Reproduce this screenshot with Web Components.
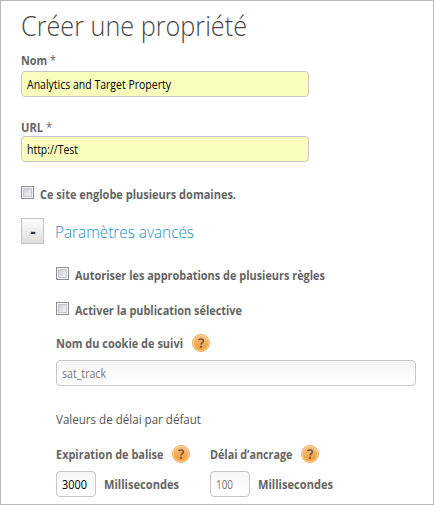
<!DOCTYPE html>
<html lang="fr">
<head>
<meta charset="utf-8">
<title>Créer une propriété</title>
<style>
html, body { margin: 0; height: 100%; background: #fff; }
body { font-family: "Open Sans", "Noto Sans", sans-serif; font-size: 12px; color: #666; }
</style>
</head>
<body>
<property-form></property-form>
<script>
// A single line of text set to an exact width.
class TextLine extends HTMLElement {
  constructor() {
    super();
    this.attachShadow({ mode: 'open' }).innerHTML = `
      <style>
        :host { display: block; line-height: 18px; white-space: nowrap; flex: none; }
        span { display: inline-block; transform-origin: 0 50%; }
        :host([kind=title]) { font-size: 28px; line-height: 40px; font-weight: 300; color: #484848; }
        :host([kind=section]) { font-size: 17px; line-height: 26px; font-weight: 300; color: #2590c4; }
        :host([kind=label]) { font-weight: 700; color: #646464; }
        :host([kind=plain]) { font-size: 12.5px; color: #555; }
        :host([kind=value]) { font-size: 12px; line-height: 24px; }
        :host([kind=unit]) { font-weight: 700; color: #646464; line-height: 26px; }
      </style><span><slot></slot></span>`;
  }
  connectedCallback() {
    const width = Number(this.getAttribute('width'));
    this.style.width = width + 'px';
    const span = this.shadowRoot.querySelector('span');
    span.style.transform = `translateY(1px) scaleX(${width / span.getBoundingClientRect().width})`;
  }
}

class TextField extends HTMLElement {
  constructor() {
    super();
    this.attachShadow({ mode: 'open' }).innerHTML = `
      <style>
        :host { display: block; box-sizing: border-box; flex: none; width: 288px; height: 26px; padding-left: 5px;
          border: 1px solid #c6c6c6; border-radius: 4px; color: #777;
          background: linear-gradient(#f6f6f6, #fff 85%); }
        :host([required]) { background: #faffbd; color: #000; }
        :host([filled]) { color: #000; }
        :host([size=wide]) { width: 360px; }
        :host([size=small]) { width: 40px; }
      </style><slot></slot>`;
  }
}

class CheckRow extends HTMLElement {
  constructor() {
    super();
    this.attachShadow({ mode: 'open' }).innerHTML = `
      <style>
        :host { display: flex; height: 18px; gap: 6px; }
        i { box-sizing: border-box; width: 13px; height: 13px; margin-top: 1px; border: 1px solid #8e8f8f;
          background: linear-gradient(135deg, #cbcfd5, #f5f5f5) 2px 2px / 7px 7px no-repeat, #f4f4f4;
          box-shadow: inset 0 0 0 1px #f4f4f4, inset 0 0 0 2px #c4c7cb; }
      </style><i></i><slot></slot>`;
  }
}

class HelpIcon extends HTMLElement {
  constructor() {
    super();
    this.attachShadow({ mode: 'open' }).innerHTML = `
      <style>:host { display: block; width: 18px; height: 18px; flex: none; } svg { display: block; }</style>
      <svg width="18" height="18" viewBox="0 0 18 18">
        <defs><linearGradient id="g" x1="0" y1="0" x2="0" y2="1">
          <stop offset="0" stop-color="#f8c184"/><stop offset=".5" stop-color="#f5ae5a"/><stop offset="1" stop-color="#f09a2c"/>
        </linearGradient></defs>
        <circle cx="9" cy="9" r="8.5" fill="url(#g)" stroke="#f0ac5e"/>
        <circle cx="9" cy="9" r="7.6" fill="none" stroke="#fbdcb2" stroke-width=".8"/>
        <path d="M6.4 6Q7.4 5 9 5Q11.4 5 11.4 6.9Q11.4 7.9 10.1 8.7Q9 9.3 9 10.6" fill="none" stroke="#755636" stroke-width="1.6"/>
        <rect x="8" y="11.7" width="2" height="2" fill="#755636"/>
      </svg>`;
  }
}

class ToggleButton extends HTMLElement {
  constructor() {
    super();
    this.attachShadow({ mode: 'open' }).innerHTML = `
      <style>
        :host { box-sizing: border-box; display: grid; place-items: center; width: 23px; height: 26px; flex: none;
          padding: 1px 0 0 1px; border: 1px solid #c4c4c4; background: linear-gradient(#fdfdfd, #dedede);
          font: 700 17px/20px "Open Sans", sans-serif; color: #333; }
      </style><slot></slot>`;
  }
}

class PropertyForm extends HTMLElement {
  constructor() {
    super();
    this.attachShadow({ mode: 'open' }).innerHTML = `
      <style>
        :host { box-sizing: border-box; display: flex; flex-direction: column; width: 434px; height: 505px;
          border: 1px solid #bbb; background: #fff; padding: 3px 0 0 20px; overflow: hidden; }
        .group { display: flex; flex-direction: column; }
        .nom { margin-top: 7px; gap: 2px; }
        .url { margin-top: 21px; }
        .multi { margin-top: 23px; }
        .section { display: flex; gap: 11px; margin-top: 15px; }
        .advanced { padding-left: 35px; margin-top: 22px; }
        .advanced check-row + check-row { margin-top: 17px; }
        .help { display: flex; gap: 9px; }
        .cookie { margin-top: 15px; gap: 8px; }
        .subtitle { margin-top: 24px; }
        .delays { display: flex; margin-top: 17px; }
        .delay { width: 154px; gap: 8px; }
        .delay .help { gap: 8.5px; }
        .entry { display: flex; gap: 8px; }
        .star { font-weight: 400; }
      </style>
      <text-line kind="title" width="226">Créer une propriété</text-line>
      <div class="group nom">
        <text-line kind="label" width="35">Nom <span class="star">*</span></text-line>
        <text-field required><text-line kind="value" width="144">Analytics and Target Property</text-line></text-field>
      </div>
      <div class="group url">
        <text-line kind="label" width="31">URL <span class="star">*</span></text-line>
        <text-field required><text-line kind="value" width="51">http://Test</text-line></text-field>
      </div>
      <check-row class="multi"><text-line kind="label" width="196">Ce site englobe plusieurs domaines.</text-line></check-row>
      <div class="section">
        <toggle-button>-</toggle-button>
        <text-line kind="section" width="139">Paramètres avancés</text-line>
      </div>
      <div class="group advanced">
        <check-row><text-line kind="label" width="250">Autoriser les approbations de plusieurs règles</text-line></check-row>
        <check-row><text-line kind="label" width="167">Activer la publication sélective</text-line></check-row>
        <div class="group cookie">
          <div class="help"><text-line kind="label" width="127">Nom du cookie de suivi</text-line><help-icon></help-icon></div>
          <text-field size="wide"><text-line kind="value" width="44">sat_track</text-line></text-field>
        </div>
        <text-line class="subtitle" kind="plain" width="145">Valeurs de délai par défaut</text-line>
        <div class="delays">
          <div class="group delay">
            <div class="help"><text-line kind="label" width="107.5">Expiration de balise</text-line><help-icon></help-icon></div>
            <div class="entry"><text-field size="small" filled><text-line kind="value" width="25">3000</text-line></text-field><text-line kind="unit" width="75">Millisecondes</text-line></div>
          </div>
          <div class="group delay">
            <div class="help"><text-line kind="label" width="82.5">Délai d’ancrage</text-line><help-icon></help-icon></div>
            <div class="entry"><text-field size="small"><text-line kind="value" width="17">100</text-line></text-field><text-line kind="unit" width="75">Millisecondes</text-line></div>
          </div>
        </div>
      </div>`;
  }
}
customElements.define('text-line', TextLine);
customElements.define('text-field', TextField);
customElements.define('check-row', CheckRow);
customElements.define('help-icon', HelpIcon);
customElements.define('toggle-button', ToggleButton);
customElements.define('property-form', PropertyForm);
</script>
</body>
</html>
